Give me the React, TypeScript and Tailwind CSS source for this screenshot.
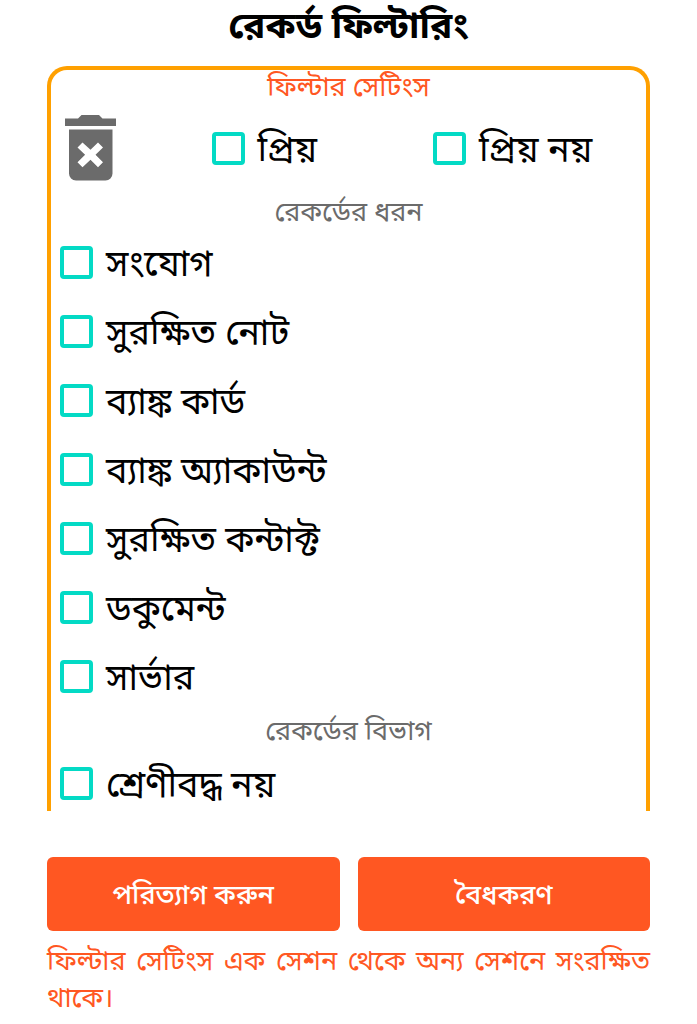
const recordTypes = [
  "সংযোগ",
  "সুরক্ষিত নোট",
  "ব্যাঙ্ক কার্ড",
  "ব্যাঙ্ক অ্যাকাউন্ট",
  "সুরক্ষিত কন্টাক্ট",
  "ডকুমেন্ট",
  "সার্ভার",
];

function Check({ label }: { label: string }) {
  return (
    <label className="flex items-center gap-[13px] text-[36px] leading-[69px] whitespace-nowrap text-black">
      <input
        type="checkbox"
        className="size-[33px] shrink-0 appearance-none rounded-[4px] border-4 border-[#03dac5] bg-white checked:bg-[#03dac5]"
      />
      <span>{label}</span>
    </label>
  );
}

function TrashIcon() {
  return (
    <svg viewBox="0 0 51 66" className="h-[66px] w-[51px]" fill="#6b6b6b" aria-hidden="true">
      <path d="M0 3.5h13L16.500 0H34l3.500 3.500H51V11H0z" />
      <path
        fillRule="evenodd"
        d="M4 14.500h43.500v44a7 7 0 0 1-7 7H11a7 7 0 0 1-7-7zM17.500 27.500l-5 5 7.600 7.300-7.600 7.400 5 5 8-7.500 7.500 7.500 5-5-7.500-7.400 7.500-7.300-5-5-7.500 7.300z"
      />
    </svg>
  );
}

export default function App() {
  return (
    <main className="flex h-screen flex-col bg-white px-[47px] pb-[9px] font-['Noto_Sans','Noto_Sans_Bengali',sans-serif]">
      <h1 className="text-center text-[37px] leading-[48px] font-bold text-black">রেকর্ড ফিল্টারিং</h1>

      <section className="mt-[18px] min-h-0 flex-1 overflow-y-auto rounded-t-[20px] border-4 border-b-0 border-[#ffa000] px-[9px] [scrollbar-width:none]">
        <h2 className="text-center text-[27px] leading-8 text-[#ff5722]">ফিল্টার সেটিংস</h2>
        <div className="grid h-[92px] grid-cols-[26fr_38fr_35fr] items-center">
          <button type="button" aria-label="মুছুন" className="pl-[5px]">
            <TrashIcon />
          </button>
          <Check label="প্রিয়" />
          <Check label="প্রিয় নয়" />
        </div>
        <h3 className="text-center text-[27px] leading-[34px] text-[#6b6b6b]">রেকর্ডের ধরন</h3>
        {recordTypes.map((type) => (
          <Check key={type} label={type} />
        ))}
        <h3 className="text-center text-[27px] leading-[38px] text-[#6b6b6b]">রেকর্ডের বিভাগ</h3>
        <Check label="শ্রেণীবদ্ধ নয়" />
      </section>

      <div className="mt-[46px] grid grid-cols-2 gap-[18px]">
        <button type="button" className="h-[74px] rounded-md bg-[#ff5722] text-[27px] font-medium text-white">
          পরিত্যাগ করুন
        </button>
        <button type="button" className="h-[74px] rounded-md bg-[#ff5722] text-[27px] font-medium text-white">
          বৈধকরণ
        </button>
      </div>
      <p className="mt-[10px] text-justify text-[27px] leading-[37px] text-[#ff5722]">
        ফিল্টার সেটিংস এক সেশন থেকে অন্য সেশনে সংরক্ষিত থাকে।
      </p>
    </main>
  );
}
